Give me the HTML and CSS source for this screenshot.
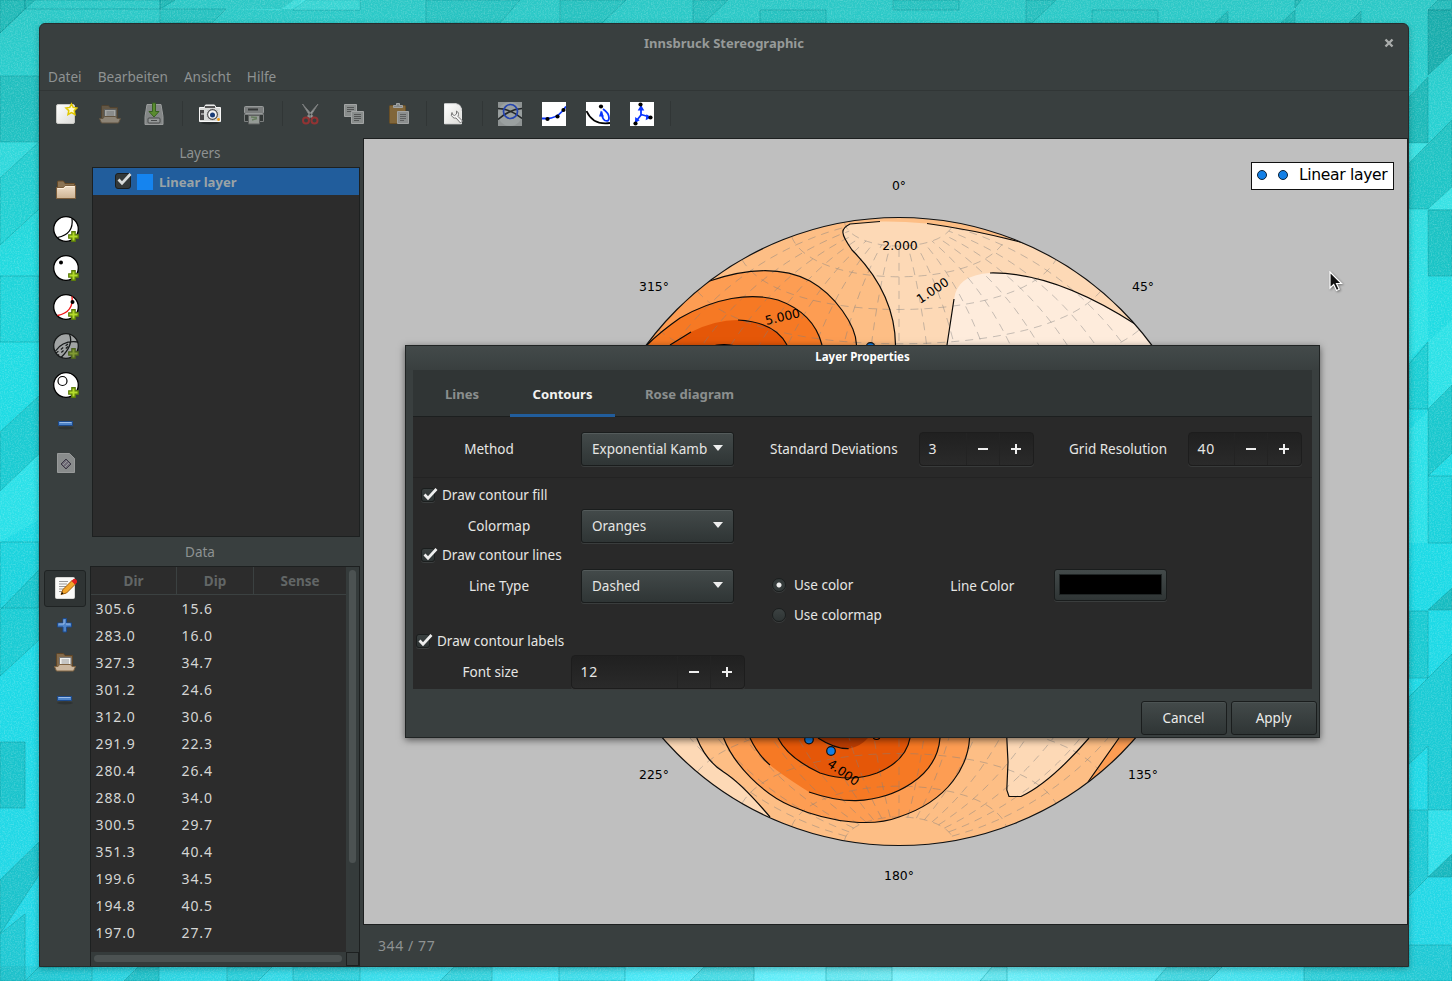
FILE: index.html
```html
<!DOCTYPE html>
<html lang="de">
<head>
<meta charset="utf-8">
<title>Innsbruck Stereographic</title>
<link rel="stylesheet" href="styles.css">
</head>
<body>
<svg width="0" height="0" class="defs">
  <defs>
    <linearGradient id="paper" x1="0" y1="0" x2="1" y2="1"><stop offset="0" stop-color="#fff"/><stop offset="1" stop-color="#dcdcd8"/></linearGradient>
    <linearGradient id="tan" x1="0" y1="0" x2="0" y2="1"><stop offset="0" stop-color="#f1e0cb"/><stop offset="1" stop-color="#cdb393"/></linearGradient>
    <symbol id="plus-badge" viewBox="0 0 10 10"><path d="M3.500 .7h3v2.800h2.800v3H6.500v2.800h-3V6.500H.7v-3h2.800z" fill="#b5dc2c" stroke="#5c7d0b" stroke-width="1.200"/></symbol>
    <symbol id="open-folder" viewBox="0 0 24 24">
      <path d="M3.500 17V4.500q0-1 1-1h6l1.500 2h7.500V17z" fill="#82694a" stroke="#5f4526"/>
      <path d="M6.500 7.500h11.500v10H6.500z" fill="#f1f1ee" stroke="#777"/><path d="M8.500 10h7.500M8.500 12h7.500M8.500 14h7.500" stroke="#999"/>
      <path d="M1.500 16.500h3.500l1.500-2h11l1.500 2h3.500l-2 4.500h-17z" fill="#cbb79f" stroke="#806442"/>
    </symbol>
    <symbol id="minus" viewBox="0 0 24 24"><ellipse cx="12" cy="16" rx="8" ry="1.500" fill="#000" opacity=".18"/><path d="M4.500 9.500h14v4h-14z" fill="#4f84c8" stroke="#1c4a8c"/><path d="M5.500 10.500h12" stroke="#9cbde8"/></symbol>
  </defs>
</svg>

<svg class="wallpaper" width="1452" height="981" viewBox="0 0 1452 981">
  <defs>
    <linearGradient id="sky" x1="0" y1="0" x2="0" y2="1"><stop offset="0" stop-color="#2cc8c6"/><stop offset=".3" stop-color="#21dce2"/><stop offset=".6" stop-color="#1cdae6"/><stop offset="1" stop-color="#25d7e6"/></linearGradient>
    <linearGradient id="strip" x1="0" y1="0" x2="1" y2="0"><stop offset="0" stop-color="#22cdda"/><stop offset=".45" stop-color="#4be8f6"/><stop offset=".62" stop-color="#7cf2fb"/><stop offset="1" stop-color="#24d6e4"/></linearGradient>
    <filter id="grain" x="0" y="0" width="100%" height="100%"><feTurbulence type="fractalNoise" baseFrequency=".7" numOctaves="2" seed="4"/><feColorMatrix values="0 0 0 0 1  0 0 0 0 1  0 0 0 0 1  1.600 0 0 0 -.650"/></filter>
  </defs>
  <rect width="1452" height="981" fill="url(#sky)"/>
  <rect y="966" width="1452" height="15" fill="url(#strip)"/>
  <g fill="#0f9d9c" stroke="#078a8d" stroke-opacity=".4" fill-opacity=".36">
    <path d="M0 0H25V9L0 33z"/><path d="M35 0H25v9z"/><path d="M0 76H39V142H0z" fill-opacity=".3"/>
    <path d="M0 33L25 9H160V0H35" fill="none"/><path d="M160 0H175L160 9z"/><path d="M160 9H226L212 23H160z" fill-opacity=".15"/>
    <path d="M293 10L306 0H360V10z" fill-opacity=".25"/><path d="M426 0H520L500 23H426z" fill-opacity=".12"/>
    <path d="M560 0h66l-24 23h-42z" fill-opacity=".15"/><path d="M693 0h35l-24 23h-11z" fill-opacity=".2"/><path d="M760 10h66v13h-66z" fill-opacity=".15"/><path d="M893 0h66v10h-66z" fill-opacity=".15"/><path d="M1026 0h30l-24 23h-6z" fill-opacity=".2"/>
    <path d="M1092 10h66v13h-66z" fill-opacity=".1"/><path d="M1215 23L1228 11v12z"/><path d="M1281 23L1295 10V23z"/><path d="M1349 23L1361 11V23z"/><path d="M1295 0h6l-6 8z"/>
    <path d="M1428 10H1452V53L1428 75z" fill-opacity=".65"/><path d="M1428 10L1438 0H1452V10z" fill-opacity=".3"/><path d="M1409 97L1428 77V143H1409z" fill-opacity=".45"/>
    <path d="M1409 163L1452 120V187L1428 209H1409z" fill-opacity=".28"/><path d="M1428 210H1452V276H1428z" fill-opacity=".36"/>
    <path d="M1409 364L1428 342V409H1409z" fill-opacity=".2"/><path d="M1428 409L1452 385V453L1428 476z" fill-opacity=".3"/><path d="M1428 476H1452V543H1428z" fill-opacity=".12"/>
    <path d="M1428 610L1452 588V610z" fill-opacity=".5"/><path d="M1409 611H1428V678H1409z" fill-opacity=".26"/><path d="M1428 678L1452 654V810H1428V746L1409 764V697z" fill-opacity=".22"/>
    <path d="M1428 877L1452 854V877z" fill-opacity=".55"/><path d="M1409 896L1428 877V810H1409z" fill-opacity=".22"/><path d="M1409 945H1452V981H1304V967H1409z" fill-opacity=".22"/>
    <path d="M0 178L39 142V209L0 245z" fill-opacity=".1"/><path d="M0 276H39V342H0z" fill-opacity=".1"/><path d="M0 432L39 396V454L0 491z" fill-opacity=".25"/><path d="M0 542H39V608H0z" fill-opacity=".1"/>
    <path d="M0 610L39 570V640L0 676z" fill-opacity=".24"/><path d="M0 742H25V808H0z" fill-opacity=".35"/><path d="M0 880L39 842V875L0 934z" fill-opacity=".35"/><path d="M0 934L25 914V981H0z" fill-opacity=".25"/>
    <path d="M25 981L39 967H92V981z" fill-opacity=".12"/><path d="M124 981L138 967H159V981z" fill-opacity=".35"/><path d="M227 967H272L258 981H227z" fill-opacity=".15"/><path d="M293 967h67v14h-67z" fill-opacity=".15"/><path d="M440 981l14-14h38v14z" fill-opacity=".2"/><path d="M559 967h66v14h-66z" fill-opacity=".1"/><path d="M690 981l14-14h50v14z" fill-opacity=".2"/><path d="M826 967h66v14h-66z" fill-opacity=".1"/><path d="M980 981l12-14h15v14z" fill-opacity=".1"/><path d="M1155 981l12-14h55l-14 14z" fill-opacity=".2"/>
  </g>
  <g fill="#54f2f4" fill-opacity=".42"><path d="M212 23L226 9H293L306 0H294L280 10 226 9z"/><path d="M293 10L303 0H360V10z"/><path d="M1409 163V143H1428z"/><path d="M1428 209L1452 187V209z"/><path d="M1409 209H1428V340L1409 360z" fill-opacity=".25"/><path d="M1428 409V342L1452 320V385z" fill-opacity=".25"/><path d="M0 142H39L0 178z" fill-opacity=".2"/><path d="M0 491L39 454V520L0 542z" fill-opacity=".25"/><path d="M1428 810H1452V854L1428 877z" fill-opacity=".25"/><path d="M1409 543H1428V411L1409 430z" fill-opacity=".25"/></g>
  <rect width="1452" height="981" filter="url(#grain)" opacity=".28"/>
</svg>

<main class="window">
  <header class="titlebar"><span class="title">Innsbruck Stereographic</span>
    <svg class="close" width="10" height="10" viewBox="0 0 10 10"><path d="M1.500 1.500l7 7M8.500 1.500l-7 7" stroke="#aaadac" stroke-width="2.400"/></svg>
  </header>
  <nav class="menubar"><span>Datei</span><span>Bearbeiten</span><span>Ansicht</span><span>Hilfe</span></nav>
  <div class="toolbar">
    <span class="tool"><svg class="ic" viewBox="0 0 24 24"><rect x="2.500" y="2.500" width="18" height="19" rx="1.500" fill="url(#paper)" stroke="#c8c8c4"/><path d="M17.500 2l1.700 3.400 3.800.6-2.800 2.600.8 3.900-3.500-1.900-3.500 1.900.8-3.900L12 6l3.800-.6z" fill="#fffbd0" stroke="#e2c800" stroke-width="1.500"/></svg></span>
    <span class="tool dim"><svg class="ic"><use href="#open-folder"/></svg></span>
    <span class="tool dim"><svg class="ic" viewBox="0 0 24 24"><path d="M5 2.500h14l2 12v8H3v-8z" fill="#bbb" stroke="#e0e0e0"/><rect x="6" y="16" width="12" height="5" rx="1" fill="#d8d8d8" stroke="#555"/><path d="M9 18.500h6" stroke="#555"/><path d="M10.500 1h3v8.500H17L12 15 7 9.500h3.500z" fill="#73c425" stroke="#37780c"/></svg></span>
    <i class="sep"></i>
    <span class="tool"><svg class="ic" viewBox="0 0 24 24"><ellipse cx="12" cy="21" rx="9" ry="1.500" opacity=".3"/><path d="M1.500 5.500h5l1-2.500h9l1.500 2.500h4.500v14h-21z" fill="#d8dad8" stroke="#f7f7f7"/><path d="M2 8h4v10H2z" fill="#454545"/><path d="M7 5h10" stroke="#555" stroke-width="2"/><path d="M3 12h3" stroke="#eee"/><circle cx="14.500" cy="12.500" r="6" fill="#555" stroke="#ddd"/><circle cx="14.500" cy="12.500" r="4.300" fill="#f4f4f4"/><circle cx="14.500" cy="13" r="2.500" fill="#183c77"/><circle cx="20.500" cy="17.500" r="1.400" fill="#ef9b12"/></svg></span>
    <span class="tool dim"><svg class="ic" viewBox="0 0 24 24"><rect x="2.500" y="4.500" width="19" height="7" rx="1" fill="#aaa" stroke="#dcdcdc"/><path d="M6 7.500h10" stroke="#333" stroke-width="2"/><path d="M2.500 12.500h19v7h-19z" fill="#303332" stroke="#aaa"/><path d="M6.500 13.500h11v8.500h-11z" fill="#d7dcd4" stroke="#777"/><path d="M9 15l6 .5M10 18l5-1.500" stroke="#87a976" stroke-width="1.500" fill="none"/></svg></span>
    <i class="sep"></i>
    <span class="tool dim"><svg class="ic" viewBox="0 0 24 24"><path d="M4.500 2l10.500 12-1.500 2.500zM20 2L9.500 14l1.500 2.500z" fill="#ddd" stroke="#aaa" stroke-width="1"/><circle cx="8" cy="18.500" r="3" fill="none" stroke="#d22b2b" stroke-width="2"/><circle cx="16.500" cy="18.500" r="3" fill="none" stroke="#d22b2b" stroke-width="2"/></svg></span>
    <span class="tool dim"><svg class="ic" viewBox="0 0 24 24"><path d="M2.500 2.500h12v12h-12z" fill="#c4c6c4" stroke="#eee"/><path d="M5 5.500h7M5 7.500h7M5 9.500h5" stroke="#666"/><path d="M9.500 9.500h12v12h-12z" fill="#c4c6c4" stroke="#eee"/><path d="M12 12.500h7M12 14.500h7M12 16.500h7M12 18.500h5" stroke="#666"/></svg></span>
    <span class="tool dim"><svg class="ic" viewBox="0 0 24 24"><rect x="3.500" y="3.500" width="16" height="18" rx="1" fill="#b58337" stroke="#8d5c15"/><path d="M7.500 5.500v-2h3v-2h3v2h3v2z" fill="#bbb" stroke="#eee"/><path d="M11.500 9.500h11v12h-11z" fill="#c9c9c9" stroke="#eee"/><path d="M14 12.500h6M14 14.500h6M14 16.500h6M14 18.500h4" stroke="#777"/></svg></span>
    <i class="sep"></i>
    <span class="tool"><svg class="ic" viewBox="0 0 24 24"><path d="M2.500 1.800h12l5 5v15h-17z" fill="url(#paper)" stroke="#e8e8e8"/><path d="M14.500 1.800q5 .5 5 7" fill="#eee" stroke="#bbb" stroke-width=".7"/><path d="M10 10.500q-2 3 1 5 1.500 1 3 .5l4.500 5 2-2-4.500-4.500q1.500-4-1.500-5.500v3l-2 1.500-2-1z" fill="#f4f4f4" stroke="#777"/></svg></span>
    <i class="sep"></i>
    <span class="tool"><svg class="ic" viewBox="0 0 24 24"><path d="M0 0h24v24H0z" fill="#8e9393"/><circle cx="12" cy="12" r="12" fill="#9aa0a0"/><path d="M0 6.500q12 0 24 10M24 6.500Q12 7 0 17.500" fill="none" stroke="#242829" stroke-width="1.600"/><circle cx="12.500" cy="9.500" r="7" fill="none" stroke="#2443ae" stroke-width="1.700"/></svg></span>
    <span class="tool"><svg class="ic" viewBox="0 0 24 24"><path d="M0 0h24v24H0z" fill="#fff"/><path d="M0 16.500h5q9 0 15-7l4-5" fill="none" stroke="#0a35ff" stroke-width="1.800"/><circle cx="5.500" cy="17" r="2.100"/><circle cx="15.500" cy="14.500" r="2.100"/><circle cx="21.500" cy="8" r="2.100"/></svg></span>
    <span class="tool"><svg class="ic" viewBox="0 0 24 24"><path d="M0 0h24v24H0z" fill="#fff"/><path d="M.5 9Q7 23.500 24 21" fill="none" stroke="#000" stroke-width="1.800"/><path d="M17 7q6 4 6 9 0 4-4 2.500-3-1.500-3.500-9" fill="none" stroke="#0a35ff" stroke-width="1.800"/><path d="M15 8.500l3 6h-5z" fill="#0a35ff"/><circle cx="15" cy="4.500" r="2.100"/></svg></span>
    <span class="tool"><svg class="ic" viewBox="0 0 24 24"><path d="M0 0h24v24H0z" fill="#fff"/><path d="M11 3v10L5.500 20M11 12.500l9 2.500" fill="none" stroke="#0a35ff" stroke-width="1.800"/><path d="M11 3l3.300 5.500H7.700zM5 21l.2-6 4.500 3.200zM21 15.500l-5.300 2.800.8-6z" fill="#0a35ff"/><circle cx="10.500" cy="2.500" r="2.100"/><circle cx="5.500" cy="21.500" r="2.100"/><circle cx="20.500" cy="15.500" r="2.100"/></svg></span>
    <i class="sep"></i>
  </div>
  <div class="body">
    <aside class="side">
      <section class="pane layers">
        <div class="vtools">
          <span><svg class="ic" viewBox="0 0 24 24"><path d="M3.500 10V4q0-1 1-1h5l1.500 2.500h9.500V11z" fill="#8c7454" stroke="#684b28"/><path d="M2.500 9.500h7l1.500-2h10.500v13h-19z" fill="url(#tan)" stroke="#7b5d3b"/><path d="M3.500 10.500h6.500l1.500-2h9" stroke="#fff1dd" fill="none"/></svg></span>
          <span><svg class="net" viewBox="0 0 26 26"><circle cx="13" cy="13" r="12.300" fill="#fff" stroke="#000" stroke-width="1.300"/><path d="M19 2.300Q21 18 4.500 21.500" fill="none" stroke="#000" stroke-width="1.200"/><use href="#plus-badge" x="15" y="15" width="11" height="11"/></svg></span>
          <span><svg class="net" viewBox="0 0 26 26"><circle cx="13" cy="13" r="12.300" fill="#fff" stroke="#000" stroke-width="1.300"/><circle cx="8" cy="7.500" r="2"/><use href="#plus-badge" x="15" y="15" width="11" height="11"/></svg></span>
          <span><svg class="net" viewBox="0 0 26 26"><circle cx="13" cy="13" r="12.300" fill="#fff" stroke="#000" stroke-width="1.300"/><path d="M19 2.300Q21 18 4.500 21.500" fill="none" stroke="#f01414" stroke-width="1.300"/><circle cx="19.500" cy="8" r="2"/><use href="#plus-badge" x="15" y="15" width="11" height="11"/></svg></span>
          <span class="dim"><svg class="net" viewBox="0 0 26 26"><circle cx="13" cy="13" r="12.300" fill="#eceeee" stroke="#000" stroke-width="1.300"/><path d="M16.500 1.300Q21 12 8 24.500M2.500 18Q10 7 25 9" fill="none" stroke="#000" stroke-width="1.300"/><path d="M15 11l-12 9M15 13.500L5 22.500" stroke="#000" stroke-width="1.200" stroke-dasharray="3 3"/><use href="#plus-badge" x="15" y="15" width="11" height="11"/></svg></span>
          <span><svg class="net" viewBox="0 0 26 26"><circle cx="13" cy="13" r="12.300" fill="#fff" stroke="#000" stroke-width="1.300"/><circle cx="9.500" cy="9" r="4.500" fill="none" stroke="#000" stroke-width="1.200"/><use href="#plus-badge" x="15" y="15" width="11" height="11"/></svg></span>
          <span><svg class="ic"><use href="#minus"/></svg></span>
          <span class="dim"><svg class="ic" viewBox="0 0 24 24"><path d="M3.500 2.500h12l5 5v14h-17z" fill="#c3c5c4" stroke="#ddd"/><path d="M7 13l5-5 5 5-5 5z" fill="#998da2" stroke="#3d3348"/><path d="M9 14l4-4M11 16l4-4" stroke="#ddd"/></svg></span>
        </div>
        <div class="panel">
          <h2>Layers</h2>
          <div class="list">
            <div class="layer-row"><span class="check flat"><svg viewBox="0 0 18 16"><path d="M3.500 7.500l3.500 3.700L15.500 2" fill="none" stroke="#d9dcdb" stroke-width="2.700"/></svg></span><i class="swatch"></i><b>Linear layer</b></div>
          </div>
        </div>
      </section>
      <section class="pane data">
        <div class="vtools">
          <span class="active"><svg class="ic" viewBox="0 0 24 24"><rect x="2.500" y="1.500" width="19" height="21" rx="1" fill="#fafaf8" stroke="#d8d8d5"/><path d="M6 5.500h9M6 8h8M6 10.500h7M6 13h5M6 15.500h4" stroke="#999"/><path d="M8 18.500l2-5 9-9 3.500 3.500-9 9z" fill="#f3a62b" stroke="#9f5c0a"/><path d="M18.500 5l2-2q1.500-1 3 1t0 3l-1.500 1.500z" fill="#e02020"/><path d="M8 18.500l1-2.500 1.500 1.500z"/></svg></span>
          <span><svg class="ic" viewBox="0 0 24 24"><path d="M10 5.500h3.500v4.500h5v4h-5v5H10v-5H4.500v-4H10z" fill="#4f84c8" stroke="#1c4a8c"/><path d="M11 6.500v4.500H5.500M13 11h4.500" stroke="#9cbde8" fill="none"/></svg></span>
          <span><svg class="ic"><use href="#open-folder"/></svg></span>
          <span><svg class="ic"><use href="#minus"/></svg></span>
        </div>
        <div class="panel">
          <h2>Data</h2>
          <div class="table">
            <div class="rows">
              <div class="tr th"><b>Dir</b><b>Dip</b><b>Sense</b></div>
              <div class="tr"><span>305.6</span><span>15.6</span></div>
              <div class="tr"><span>283.0</span><span>16.0</span></div>
              <div class="tr"><span>327.3</span><span>34.7</span></div>
              <div class="tr"><span>301.2</span><span>24.6</span></div>
              <div class="tr"><span>312.0</span><span>30.6</span></div>
              <div class="tr"><span>291.9</span><span>22.3</span></div>
              <div class="tr"><span>280.4</span><span>26.4</span></div>
              <div class="tr"><span>288.0</span><span>34.0</span></div>
              <div class="tr"><span>300.5</span><span>29.7</span></div>
              <div class="tr"><span>351.3</span><span>40.4</span></div>
              <div class="tr"><span>199.6</span><span>34.5</span></div>
              <div class="tr"><span>194.8</span><span>40.5</span></div>
              <div class="tr"><span>197.0</span><span>27.7</span></div>
            </div>
            <div class="vscroll"><i></i></div>
            <div class="hscroll"><i></i></div>
            <div class="corner"></div>
          </div>
        </div>
      </section>
    </aside>
    <section class="view">
      <div class="plot">
        <svg width="1043" height="785" viewBox="364 139 1043 785">
          <clipPath id="disc"><circle cx="899" cy="531.500" r="314"/></clipPath>
          <g clip-path="url(#disc)">
            <circle cx="899" cy="531.500" r="314" fill="#fdbe85"/>
            <path fill="#fdd9b6" d="M880 221.500L850 224Q842 228 843 233 843 237 852 250C876 274 895 305 895.500 345V500H1250V300L1024 243Q975 230 927 223.500 900 221 880 221.500z"/>
            <path fill="#feecdc" d="M947 345L954 299Q957 275 990 273C1040 272 1090 295 1135 324L1300 450V500H947z"/>
            <path fill="#fdd9b6" d="M640 700L696.800 738Q706 761 723.600 772T770 817L700 850H600zM1006.800 700V738L1008 762 1006.800 790 1009 796.500H1021Q1050 783 1089 738V700z"/>
            <path fill="#fd9d53" d="M640 500V300L708 281.500C750 267 785 268 810 281 835 295 856 325 856.500 345V500zM723.600 700V738C734 765 763 794 791 806 835 825 876 826 899 817 950 800 968 765 969.600 738V700zM1119 700V738L1088 782 1200 760V700z"/>
            <path fill="#f67924" d="M600 500V380L647 345Q660 332 680 318C715 298 750 292 778 300 803 309 817 325 822 345V500zM750 700V738Q758 755 770 765T809 792Q835 801 856 800.700C895 799 937 777 940 738V700z"/>
            <path fill="#e55708" d="M640 500V360L670 345 691 332Q715 320 738 320 775 322 787 345V500zM778 700V738Q788 758 820 773 850 783 877 773 906 761 910 738V700z"/>
            <path fill="#b83c03" d="M818 700V738Q835 749 848.600 748.700 860 747 868 738V700z"/>
            <ellipse cx="724" cy="353" rx="20" ry="8.500" fill="#b83c03" stroke="#000"/>
            <path id="graticule" class="graticule"/>
            <g class="contour">
              <path d="M880 221.500L850 224Q842 228 843 233 843 237 852 250C876 274 895 305 895.500 345"/>
              <path d="M927 223.500Q975 230 1024 243M947 345L954 299M990 273C1040 272 1090 295 1135 324"/>
              <path d="M708 281.500C750 267 785 268 810 281 835 295 856 325 856.500 345M647 345Q660 332 680 318C715 298 750 292 778 300 803 309 817 325 822 345M670 345L691 332M738 320Q775 322 787 345"/>
              <path d="M696.800 738Q706 761 723.600 772T770 817M723.600 738C734 765 763 794 791 806 835 825 876 826 899 817 950 800 968 765 969.600 738"/>
              <path d="M750 738Q758 755 770 765M809 792Q835 801 856 800.700C895 799 937 777 940 738M778 738Q788 758 820 773 850 783 877 773 906 761 910 738M818 738Q835 749 848.600 748.700"/>
              <path d="M1006.800 738L1008 762 1006.800 790 1009 796.500H1021Q1050 783 1089 738M1119 738L1088 782"/>
            </g>
          </g>
          <circle cx="899" cy="531.500" r="314" fill="none" stroke="#111" stroke-width="1.200"/>
          <g fill="#127fe6" stroke="#111" stroke-width="1.200"><circle cx="870.500" cy="347" r="4.300"/><circle cx="809" cy="739.500" r="4.300"/><circle cx="831" cy="751" r="4.300"/></g>
          <circle cx="876.500" cy="736" r="3.500" fill="none" stroke="#000" stroke-width="1.200"/>
          <g class="mark">
            <text x="899" y="190">0°</text><text x="1143" y="291">45°</text><text x="1143" y="779">135°</text><text x="899" y="880">180°</text><text x="654" y="779">225°</text><text x="654" y="291">315°</text>
            <text x="900" y="250">2.000</text><text transform="translate(935 294) rotate(-34)">1.000</text><text transform="translate(783.500 321) rotate(-13)">5.000</text><text transform="translate(841 776) rotate(35)">4.000</text>
          </g>
        </svg>
        <div class="legend"><i></i><i></i><span>Linear layer</span></div>
      </div>
      <footer class="status">344 / 77</footer>
    </section>
  </div>
</main>

<div class="dialog">
  <header>Layer Properties</header>
  <div class="notebook">
    <div class="tabs"><b>Lines</b><b class="on">Contours</b><b>Rose diagram</b></div>
    <div class="row method">
      <label class="name">Method</label><div class="combo">Exponential Kamb<i></i></div>
      <label class="sd">Standard Deviations</label><div class="spin s1"><span>3</span><em class="m"></em><em class="p"></em></div>
      <label class="gr">Grid Resolution</label><div class="spin s2"><span>40</span><em class="m"></em><em class="p"></em></div>
    </div>
    <div class="row option r1"><span class="check"><svg viewBox="0 0 18 16"><path d="M3.500 7.500l3.500 3.700L15.500 2" fill="none" stroke="#eee" stroke-width="2.700"/></svg></span>Draw contour fill</div>
    <div class="row field"><label class="name">Colormap</label><div class="combo">Oranges<i></i></div></div>
    <div class="row option r2"><span class="check"><svg viewBox="0 0 18 16"><path d="M3.500 7.500l3.500 3.700L15.500 2" fill="none" stroke="#eee" stroke-width="2.700"/></svg></span>Draw contour lines</div>
    <div class="row field"><label class="name">Line Type</label><div class="combo">Dashed<i></i></div><span class="radio on"></span><span class="use">Use color</span><label class="lc">Line Color</label><div class="color"><i></i></div></div>
    <div class="row option r3"><span class="radio"></span>Use colormap</div>
    <div class="row option r4"><span class="check"><svg viewBox="0 0 18 16"><path d="M3.500 7.500l3.500 3.700L15.500 2" fill="none" stroke="#eee" stroke-width="2.700"/></svg></span>Draw contour labels</div>
    <div class="row last"><label class="fs">Font size</label><div class="spin s3"><span>12</span><em class="m"></em><em class="p"></em></div></div>
  </div>
  <footer><button>Cancel</button><button>Apply</button></footer>
</div>

<svg class="cursor" width="14" height="22" viewBox="0 0 14 22"><path d="M1 1v16l3.700-3.500 2.800 6 2.700-1.200-2.700-5.800H12.500z" fill="#111" stroke="#fff" stroke-width="1.200"/></svg>
<script src="net.js"></script>
</body>
</html>
```

FILE: styles.css
```css
* { box-sizing: border-box; }
body { margin: 0; width: 1452px; height: 981px; overflow: hidden; position: relative; background: #20d4da; font: 13.5px/20px "Noto Sans", "Open Sans", sans-serif; color: #8e9292; }
i, em { font-style: normal; display: block; }
svg { display: block; }
.defs { position: absolute; }
.wallpaper { position: absolute; inset: 0; }
.window { position: absolute; left: 39px; top: 23px; width: 1370px; height: 944px; display: flex; flex-direction: column; background: #393f3f; border: 1px solid #272c2c; border-radius: 6px 6px 0 0; box-shadow: 0 2px 6px rgba(0,60,60,.35); }
.titlebar { position: relative; height: 39px; flex: none; display: flex; align-items: center; justify-content: center; padding-bottom: 2px; }
.title { font-weight: 700; font-size: 13px; color: #969a99; }
.close { position: absolute; right: 14px; top: 14px; }
.menubar { height: 28px; flex: none; display: flex; gap: 16px; padding: 4px 0 0 8px; border-bottom: 1px solid #313636; font-size: 13.6px; }
.toolbar { height: 47px; flex: none; display: flex; align-items: center; padding: 0 0 2px 4px; }
.tool { width: 44px; display: flex; justify-content: center; }
.sep { width: 12px; height: 25px; border-right: 1px solid #313636; transform: translateX(-5px); }
.ic { width: 24px; height: 24px; }
.net { width: 26px; height: 26px; }
.dim { opacity: .58; }
.body { flex: 1; display: flex; min-height: 0; }
.side { width: 323px; display: flex; flex-direction: column; }
.pane { display: flex; }
.layers { height: 399px; }
.data { height: 428px; }
.vtools { width: 52px; flex: none; display: flex; flex-direction: column; }
.vtools span { display: flex; align-items: center; justify-content: center; }
.layers .vtools { padding-top: 32px; }
.layers .vtools span { height: 39px; }
.data .vtools { padding: 33px 0 0 4px; width: 50px; }
.data .vtools span { height: 37px; width: 42px; padding: 0 1px 2px 0; }
.data .vtools .active { background: #2f3434; border: 1px solid #1f2323; border-radius: 3px; padding: 0 0 2px; }
.panel { flex: 1; display: flex; flex-direction: column; padding-right: 3px; }
h2 { margin: 0; font-size: 13.5px; font-weight: 400; height: 29px; line-height: 31px; text-align: center; flex: none; }
.layers h2 { padding-right: 52px; }
.data h2 { padding-right: 50px; }
.list { height: 370px; background: #2c2c2c; border: 1px solid #1d2020; }
.layer-row { height: 27px; background: #215d9c; display: flex; align-items: center; padding-left: 22px; color: #9aa3a6; }
.layer-row b { font-size: 13.1px; padding-top: 1px; }
.swatch { width: 16px; height: 16px; background: #1584ef; margin: 0 6px; }
.check { width: 14px; height: 14px; flex: none; border: 1px solid #1b1e1e; border-radius: 3px; background: linear-gradient(#393f3f, #2e3434); box-shadow: 0 1px #3b3e3e; }
.check svg { width: 18px; height: 16px; margin: -2px 0 0 -1px; overflow: visible; }
.check.flat { width: 16px; height: 16px; margin-top: -1px; background: #343939; box-shadow: none; }
.table { height: 400px; display: grid; grid-template: 385px 14px / 255px 13px; border: 1px solid #1d2020; }
.rows { background: #2c2c2c; overflow: hidden; color: #d5d6d4; }
.tr { height: 27px; display: grid; grid-template-columns: 85px 77px 93px; font-size: 14px; letter-spacing: .85px; line-height: 27px; }
.tr span { padding-left: 4.6px; }
.tr span + span { padding-left: 5.6px; }
.th { border-bottom: 1px solid #3b4141; height: 28px; text-align: center; color: #626666; font-size: 13.5px; letter-spacing: 0; line-height: 28px; }
.th b + b { border-left: 1px solid #3b4141; }
.vscroll { padding: 3px; background: #353b3b; }
.vscroll i { width: 7px; height: 293px; border-radius: 4px; background: #4c5252; }
.hscroll { padding: 3px; background: #353b3b; }
.hscroll i { width: 248px; height: 7px; border-radius: 4px; background: #4c5252; }
.corner { border: 1px solid #1d2020; }
.view { flex: 1; display: flex; flex-direction: column; }
.plot { position: relative; height: 787px; border: 1px solid #1d2020; background: #bfbfbf; flex: none; }
.graticule { fill: none; stroke: #808080; stroke-opacity: .45; stroke-dasharray: 8 6; }
.contour { fill: none; stroke: #0d0b09; stroke-width: 1.2; }
.mark { font: 12.4px "DejaVu Sans", sans-serif; text-anchor: middle; fill: #000; }
.legend { position: absolute; right: 13px; top: 23px; width: 143px; height: 28px; background: #fff; border: 1px solid #111; display: flex; align-items: center; color: #000; font: 15.6px/20px "DejaVu Sans", sans-serif; letter-spacing: -.35px; padding: 0 0 2px 5px; }
.legend i { width: 10px; height: 10px; border-radius: 50%; border: 1px solid #0b2035; background: #127fe6; margin-right: 11px; }
.legend i + i { margin-right: 11px; }
.legend span { white-space: nowrap; }
.status { padding: 11px 0 0 15px; font-size: 14px; letter-spacing: .6px; line-height: 20px; }
.dialog { position: absolute; left: 405px; top: 345px; width: 915px; height: 393px; display: flex; flex-direction: column; padding: 0 7px; border: 1px solid #202424; box-shadow: 0 2px 7px rgba(0,0,0,.55); color: #e6e6e4; background: linear-gradient(#434a4a, #393f3f 24px); }
.dialog header { height: 24px; line-height: 21px; text-align: center; font-weight: 700; font-size: 11.5px; color: #fff; flex: none; }
.notebook { background: #292929; height: 319px; flex: none; }
.tabs { height: 47px; background: #303535; border-bottom: 1px solid #1c1f1f; display: flex; }
.tabs b { font-size: 13.1px; line-height: 48px; color: #8b8f8e; margin: 0 0 -1px; }
.tabs b:first-child { padding-left: 32px; width: 97px; }
.tabs .on { color: #f2f2f0; border-bottom: 3px solid #215d9c; width: 105px; text-align: center; }
.tabs b:last-child { padding-left: 30px; }
.row { display: flex; align-items: center; white-space: nowrap; }
.method { height: 61px; border-bottom: 1px solid #232323; padding-top: 4px; }
.name { width: 168px; text-align: center; padding-left: 4px; flex: none; }
.method .name { padding: 0 16px 0 0; }
.combo { position: relative; width: 153px; height: 34px; flex: none; border: 1px solid #1a1d1d; border-radius: 3px; background: linear-gradient(#434a4a, #2f3535); box-shadow: inset 0 1px #545b5b, 0 1px #3a3d3d; line-height: 32px; padding-left: 10px; }
.combo i { position: absolute; right: 10px; top: 12px; border: 5px solid transparent; border-top: 6px solid #eee; border-bottom: 0; }
.sd { margin-left: 36px; width: 149px; }
.gr { margin-left: 35px; width: 119px; }
.spin { height: 34px; display: flex; padding-right: 1px; border: 1px solid #1d1d1d; border-radius: 4px; background: linear-gradient(#202020, #2a2a2a); box-shadow: 0 1px #393b3b; line-height: 32px; font-size: 14px; letter-spacing: .8px; }
.spin span { flex: 1; padding-left: 8.5px; }
.spin em { width: 33px; border-left: 1px solid #232323; display: grid; place-content: center; place-items: center; }
.spin em::before, .spin em::after { content: ""; grid-area: 1 / 1; width: 10px; height: 2px; background: #eee; }
.spin .m::after { display: none; }
.spin .p::after { width: 2px; height: 10px; }
.s1 { width: 115px; } .s2 { width: 114px; } .s3 { width: 174px; }
.option { height: 26px; gap: 7px; padding-left: 8px; }
.r1 { margin: 3px 0 1px; height: 27px; }
.r2 { height: 24px; margin-bottom: 2px; }
.field { height: 34px; }
.radio { width: 14px; height: 14px; border-radius: 50%; flex: none; border: 1px solid #1b1e1e; background: linear-gradient(#3c4242, #2e3434); box-shadow: 0 1px #3a3d3d; }
.radio.on { margin: -2px 8px 0 38px; background: radial-gradient(circle, #eee 2px, #343a3a 3px); }
.use { margin-top: -2px; }
.lc { width: 104px; margin-left: 97px; }
.color { width: 113px; height: 32px; margin-top: -2px; border: 1px solid #1a1d1d; border-radius: 3px; background: linear-gradient(#434a4a, #2f3535); padding: 4px; box-shadow: 0 1px #3a3d3d; }
.color i { height: 21px; background: #000; border: 1px solid #202525; }
.r3 { padding-left: 359px; gap: 8px; height: 24px; }
.r4 { padding-left: 3px; height: 28px; }
.last { height: 34px; }
.fs { width: 158px; text-align: center; padding-right: 3px; }
.dialog footer { flex: 1; display: flex; justify-content: flex-end; gap: 4px; padding-top: 12px; margin-right: -5px; }
button { width: 86px; height: 34px; border: 1px solid #1a1d1d; border-radius: 3px; background: linear-gradient(#434a4a, #2f3535); box-shadow: inset 0 1px #4c5353; font: 13.5px "Noto Sans", "Open Sans", sans-serif; color: #ececea; padding: 0 1px 0 0; }
.cursor { position: absolute; left: 1329px; top: 271px; filter: drop-shadow(1px 1px 1px rgba(0,0,0,.4)); }
```

FILE: net.js
```js
// Equal-area graticule with 10 degree spacing.
const rad = Math.PI / 180;
const R = 314, CX = 899, CY = 531.5;

function project(lat, lon) {
  const p = lat * rad, l = lon * rad;
  const k = Math.sqrt(1 / (1 + Math.cos(p) * Math.cos(l)));
  return (CX + R * k * Math.cos(p) * Math.sin(l)).toFixed(1) + " " + (CY - R * k * Math.sin(p)).toFixed(1);
}

function line(from, to, fn) {
  const pts = [];
  for (let a = from; a <= to; a += 2) pts.push(fn(a));
  return "M" + pts.join("L");
}

let d = "";
for (let lon = -80; lon <= 80; lon += 10) d += line(-80, 80, lat => project(lat, lon));
for (let lat = -80; lat <= 80; lat += 10) d += line(-90, 90, lon => project(lat, lon));
document.getElementById("graticule").setAttribute("d", d);
```
